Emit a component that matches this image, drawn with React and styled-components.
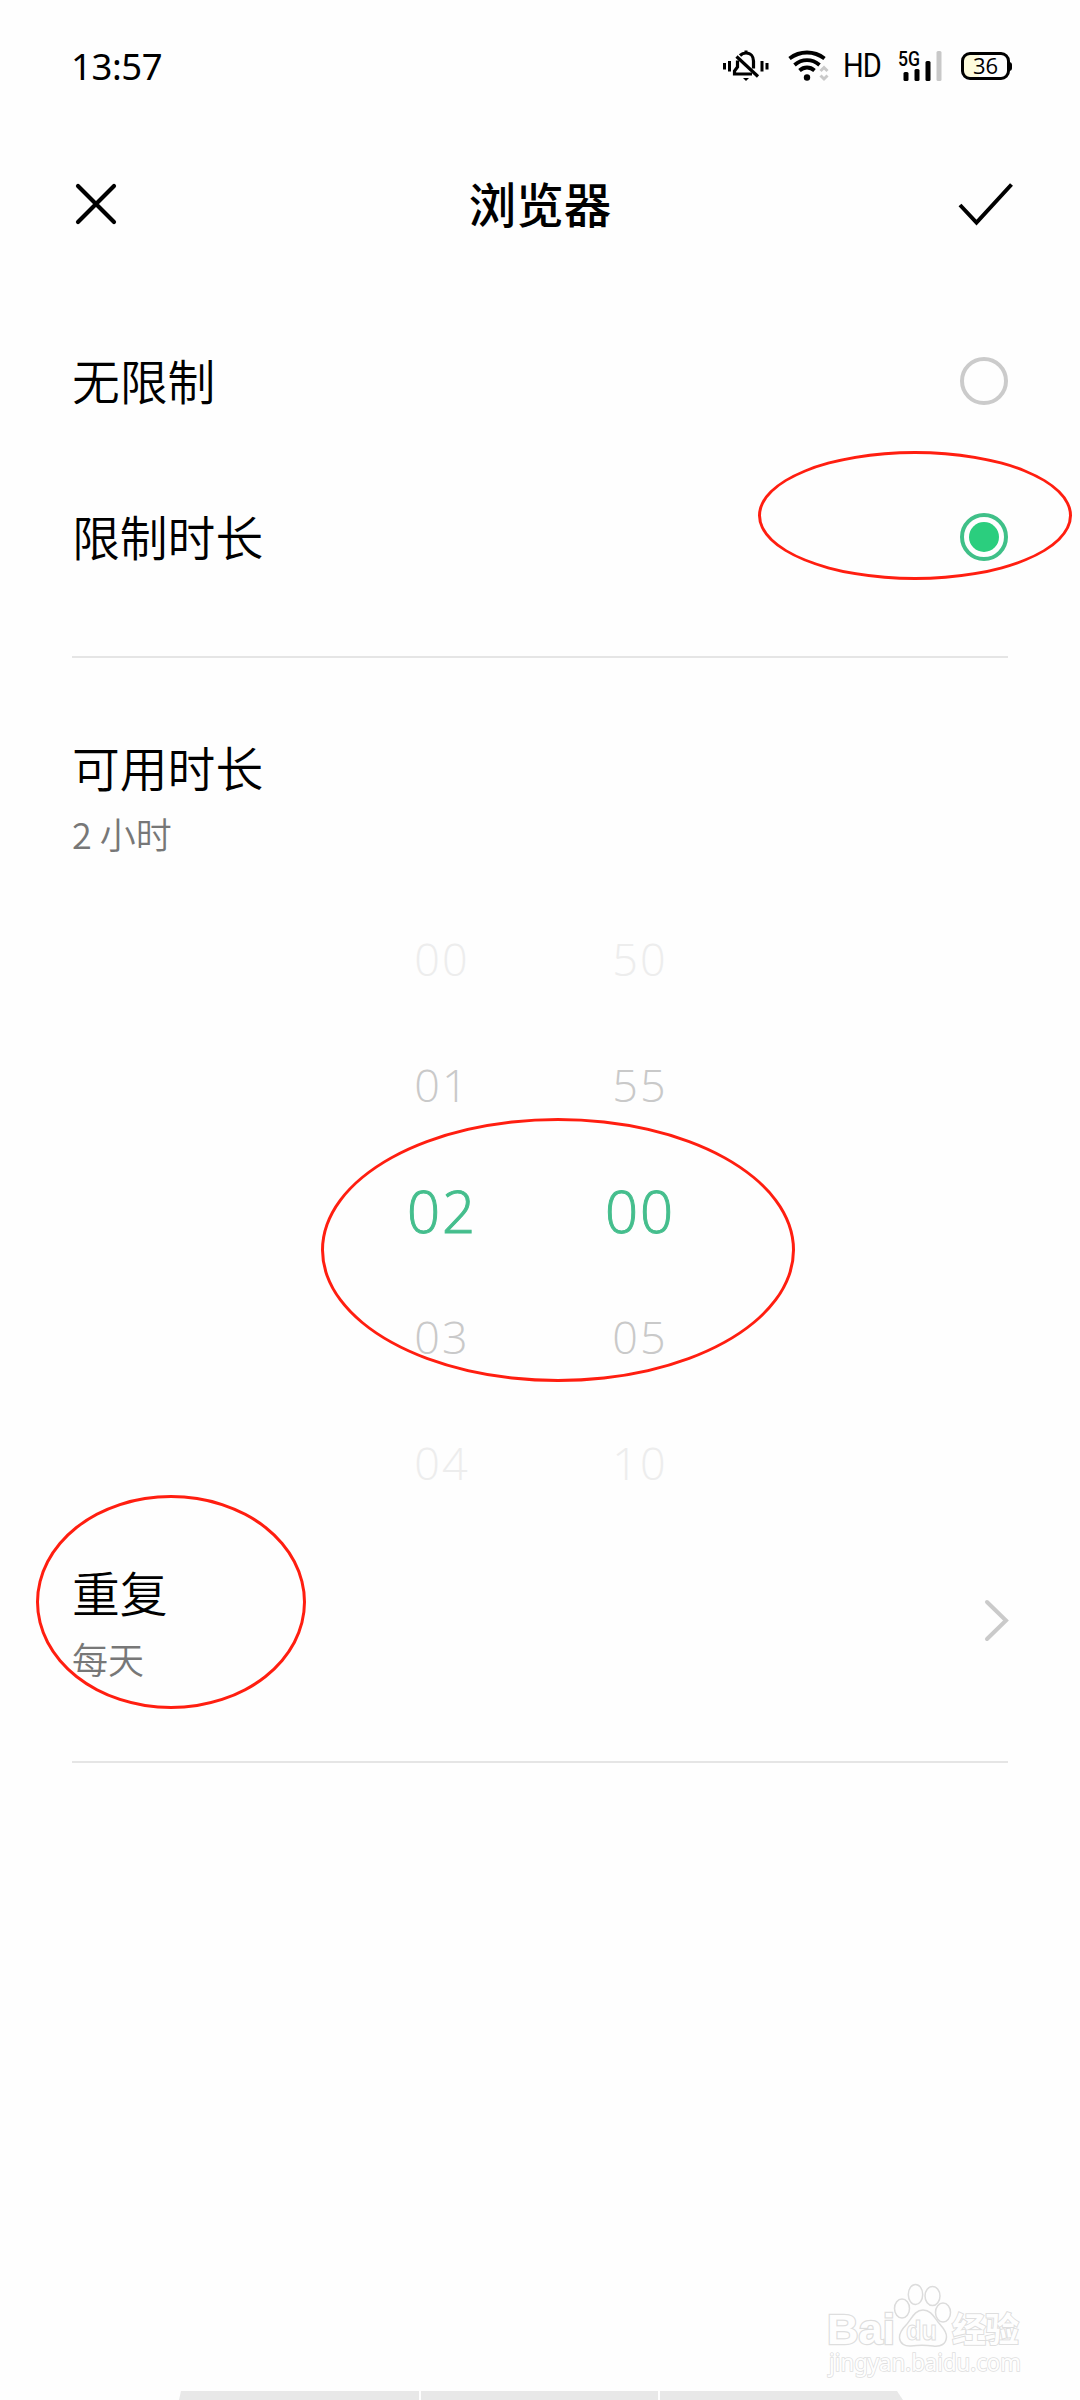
import styled, { createGlobalStyle } from "styled-components";
import { useState } from "react";

const GlobalStyle = createGlobalStyle`
  * {
    box-sizing: border-box;
  }
  body {
    margin: 0;
    background: #fefefe;
    font-family: "Noto Sans CJK SC", sans-serif;
    color: #000;
  }
`;

const Screen = styled.div`
  position: relative;
  display: flex;
  flex-direction: column;
  width: 1080px;
  height: 2400px;
  overflow: hidden;
`;

const StatusBar = styled.div`
  display: flex;
  align-items: center;
  justify-content: space-between;
  height: 132px;
  padding: 0 68px 0 71px;
`;

const Clock = styled.span`
  font-family: "Noto Sans", sans-serif;
  font-size: 36.5px;
  letter-spacing: -0.4px;
  line-height: 40px;
`;

const StatusIcons = styled.div`
  display: flex;
  align-items: center;
  svg {
    display: block;
    overflow: visible;
  }
`;

const HdLabel = styled.span`
  width: 38px;
  margin: 0 17px 0 13px;
  font-family: Roboto, sans-serif;
  font-size: 33px;
  letter-spacing: -1px;
  line-height: 40px;
  transform: scaleX(0.88);
  transform-origin: left;
`;

const Battery = styled.div`
  position: relative;
  display: flex;
  align-items: center;
  justify-content: center;
  width: 49px;
  height: 28px;
  margin: 0 2px 0 19px;
  border: 3px solid #000;
  border-radius: 9px;
  background: linear-gradient(90deg, #fdfbdc 36%, #fefefe 36%);
  font-family: "Open Sans", sans-serif;
  font-size: 22px;
  line-height: 20px;
  padding-bottom: 2px;

  &::after {
    content: "";
    position: absolute;
    right: -5px;
    top: 7px;
    width: 3px;
    height: 9px;
    border-radius: 0 3px 3px 0;
    background: #000;
  }
`;

const TitleBar = styled.header`
  display: flex;
  align-items: center;
  justify-content: space-between;
  height: 144px;
  padding: 0 64px 0 72px;
`;

const Title = styled.h1`
  margin: 0 0 3px 4px;
  font-size: 47.5px;
  font-weight: 500;
  line-height: 64px;
`;

const IconButton = styled.button`
  display: flex;
  padding: 0;
  border: 0;
  background: none;
`;

const Options = styled.div`
  padding: 27px 72px 0;
`;

const OptionRow = styled.div`
  display: flex;
  align-items: center;
  justify-content: space-between;
  height: 156px;
`;

const Label = styled.div`
  padding-bottom: 2px;
  font-size: 47.8px;
  font-weight: 350;
  line-height: 62px;
`;

const SubLabel = styled.div`
  margin: 11px 0 2px;
  font-size: 36px;
  font-weight: 350;
  line-height: 44px;
  color: #777;
`;

const Radio = styled.span`
  display: flex;
  align-items: center;
  justify-content: center;
  width: 48px;
  height: 48px;
  border: 4px solid ${({ $checked }) => ($checked ? "#3fc088" : "#cbcbcb")};
  border-radius: 50%;

  &::after {
    content: "";
    width: 30px;
    height: 30px;
    border-radius: 50%;
    background: ${({ $checked }) => ($checked ? "#2bce7e" : "transparent")};
  }
`;

const Divider = styled.div`
  flex: none;
  height: 2px;
  margin: ${({ $top }) => $top}px 72px 0;
  background: #e5e5e5;
`;

const Duration = styled.section`
  padding: 78px 72px 0;
`;

const Picker = styled.div`
  display: grid;
  grid-template-columns: 198px 198px;
  justify-content: center;
  margin-top: 39px;
  padding-left: 2px;
`;

const Wheel = styled.div`
  display: flex;
  flex-direction: column;
`;

const wheelColors = ["#45be8d", "#c9c9c9", "#ededed"];

const WheelItem = styled.div`
  height: 126px;
  font-family: "Open Sans", sans-serif;
  font-size: ${({ $distance }) => ($distance ? 45 : 58)}px;
  font-weight: 300;
  letter-spacing: 2px;
  line-height: 126px;
  text-align: center;
  color: ${({ $distance }) => wheelColors[$distance]};
  -webkit-text-stroke: ${({ $distance }) => ($distance ? 0 : 1)}px currentColor;
`;

const RepeatRow = styled.div`
  display: flex;
  align-items: center;
  justify-content: space-between;
  margin-top: 35px;
  padding: 0 70px 0 72px;
`;

// red marker ring drawn over the page
const Ring = styled.div`
  position: absolute;
  left: ${({ $x }) => $x}px;
  top: ${({ $y }) => $y}px;
  width: ${({ $w }) => $w}px;
  height: ${({ $h }) => $h}px;
  border: 3px solid #ff1e10;
  border-radius: 50%;
`;

const Watermark = styled.svg`
  position: absolute;
  left: 820px;
  top: 2276px;
`;

const BottomTabs = styled.div`
  display: flex;
  gap: 2px;
  width: 724px;
  height: 9px;
  margin: auto 0 0 179px;
  clip-path: polygon(2px 0, 718px 0, 100% 100%, 0 100%);
`;

const BottomTab = styled.div`
  width: ${({ $w }) => $w}px;
  background: #e8e8e8;
`;

const MutedBell = () => (
  <svg width="46" height="32" viewBox="0 0 46 32" fill="none" stroke="#000">
    <path d="M1.5 13v6.500M6.500 11v10.500M39 11v10.500M44 13v6.500" strokeWidth="3" />
    <path d="M17 5.500C19 3.500 21 3 23 3C28 3 30.500 7 30.500 11V18.500" strokeWidth="3.200" />
    <path d="M14.500 10.500V17L11.500 21V24H29" strokeWidth="3.200" />
    <path d="M13.500 6.500L35 26.500" strokeWidth="3.200" />
    <path d="M23 0.500V3" strokeWidth="3" />
    <path d="M20 28H26L23 31Z" fill="#000" stroke="none" />
  </svg>
);

const Wifi = () => (
  <svg width="42" height="32" viewBox="0 0 42 32" fill="none">
    <g stroke="#000" strokeWidth="3.800">
      <path d="M1.500 8.500C12 0.500 26 0.500 36.500 8.500" />
      <path d="M6.500 15C14 8.500 24 8.500 31.500 15" />
      <path d="M11.500 20.500C16 16.500 22 16.500 26.500 20.500" />
    </g>
    <circle cx="19" cy="27.500" r="3.200" fill="#000" />
    <path d="M32.500 21L36 17.500L39.500 21M32.500 25.500L36 29L39.500 25.500" stroke="#c9c9c9" strokeWidth="3" />
  </svg>
);

const SignalText = styled.text`
  font-family: Roboto, sans-serif;
  font-size: 20px;
  font-weight: 500;
`;

const Signal = () => (
  <svg width="44" height="32" viewBox="0 0 44 32">
    <SignalText x="0" y="15.500" textLength="22" lengthAdjust="spacingAndGlyphs">
      5G
    </SignalText>
    <rect x="5.500" y="22" width="5" height="9" rx="1.500" />
    <rect x="16.500" y="19" width="5" height="12" rx="1.500" />
    <rect x="27.500" y="11" width="5" height="20" rx="1.500" />
    <rect x="38.500" y="1" width="5" height="30" rx="1.500" fill="#c8c8c8" />
  </svg>
);

const BrandText = styled.text`
  font-family: ${({ $font }) => $font};
  font-size: ${({ $size }) => $size}px;
  font-weight: ${({ $bold }) => ($bold ? 700 : 400)};
  fill: #fefefe;
  stroke: #dedede;
  stroke-width: ${({ $line }) => $line}px;
  paint-order: ${({ $inner }) => ($inner ? "normal" : "stroke")};
`;

const BaiduMark = () => (
  <Watermark width="210" height="110" viewBox="0 0 210 110">
    <BrandText $font="Liberation Sans, sans-serif" $size={43} $bold $line={2.5} x="7" y="68" textLength="68" lengthAdjust="spacingAndGlyphs">
      Bai
    </BrandText>
    <g fill="#fefefe" stroke="#dcdcdc" strokeWidth="1.500">
      <ellipse cx="82" cy="32.500" rx="7.500" ry="9.500" />
      <ellipse cx="95.500" cy="18.500" rx="7.200" ry="10" />
      <ellipse cx="112.500" cy="20" rx="7.500" ry="9.500" />
      <ellipse cx="123" cy="36.500" rx="7.500" ry="9.500" />
      <path d="M103 34C95 34 92 42 87 48C82 53 79 57 79.500 62C80 68 85 70.500 91 70C98 69 106 69 113 70C121 71 126 68 126.500 61C127 55 122 51 118 46C114 41 111 34 103 34Z" />
    </g>
    <BrandText $font="Liberation Sans, sans-serif" $size={27} $bold $inner $line={1} x="86" y="64" textLength="31" lengthAdjust="spacingAndGlyphs">
      du
    </BrandText>
    <BrandText $font='"Noto Sans CJK SC", sans-serif' $size={34} $bold $line={2} x="132" y="66" textLength="67">
      经验
    </BrandText>
    <BrandText $font="Noto Sans, sans-serif" $size={23} $bold={false} $line={1.6} x="9" y="94.500" textLength="192" lengthAdjust="spacingAndGlyphs">
      jingyan.baidu.com
    </BrandText>
  </Watermark>
);

const hours = ["00", "01", "02", "03", "04"];
const minutes = ["50", "55", "00", "05", "10"];

const App = () => {
  const [limited, setLimited] = useState(true);

  return (
    <Screen>
      <GlobalStyle />
      <StatusBar>
        <Clock>13:57</Clock>
        <StatusIcons>
          <MutedBell />
          <svg width="19" height="32" />
          <Wifi />
          <HdLabel>HD</HdLabel>
          <Signal />
          <Battery>36</Battery>
        </StatusIcons>
      </StatusBar>

      <TitleBar>
        <IconButton aria-label="关闭">
          <svg width="48" height="48" fill="none" stroke="#000" strokeWidth="4.200" strokeLinecap="round">
            <path d="M6 6L42 42M42 6L6 42" />
          </svg>
        </IconButton>
        <Title>浏览器</Title>
        <IconButton aria-label="完成">
          <svg width="60" height="48" fill="none" stroke="#000" strokeWidth="4">
            <path d="M4 25L20.500 42.500L55.500 4.500" />
          </svg>
        </IconButton>
      </TitleBar>

      <Options>
        <OptionRow onClick={() => setLimited(false)}>
          <Label>无限制</Label>
          <Radio $checked={!limited} />
        </OptionRow>
        <OptionRow onClick={() => setLimited(true)}>
          <Label>限制时长</Label>
          <Radio $checked={limited} />
        </OptionRow>
      </Options>

      <Divider $top={41} />

      <Duration>
        <Label>可用时长</Label>
        <SubLabel>2 小时</SubLabel>
      </Duration>

      <Picker>
        {[hours, minutes].map((values, col) => (
          <Wheel key={col}>
            {values.map((value, i) => (
              <WheelItem key={value} $distance={Math.abs(i - 2)}>
                {value}
              </WheelItem>
            ))}
          </Wheel>
        ))}
      </Picker>

      <RepeatRow>
        <div>
          <Label>重复</Label>
          <SubLabel>每天</SubLabel>
        </div>
        <svg width="28" height="48" fill="none" stroke="#cacaca" strokeWidth="4" strokeLinecap="round">
          <path d="M5 4L24 22.500L5 41" />
        </svg>
      </RepeatRow>

      <Divider $top={79} />

      <BottomTabs>
        <BottomTab $w={240} />
        <BottomTab $w={237} />
        <BottomTab $w={243} />
      </BottomTabs>

      <BaiduMark />

      <Ring $x={758} $y={451} $w={314} $h={129} />
      <Ring $x={321} $y={1118} $w={474} $h={264} />
      <Ring $x={36} $y={1495} $w={270} $h={214} />
    </Screen>
  );
};

export default App;
